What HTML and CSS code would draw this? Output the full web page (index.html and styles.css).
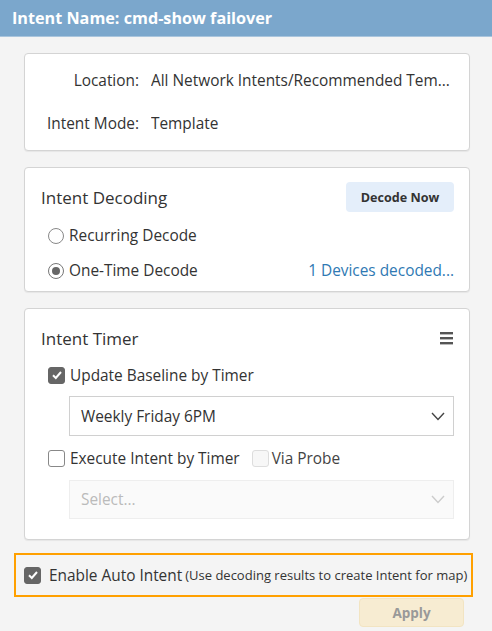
FILE: index.html
```html
<!DOCTYPE html>
<html>
<head>
<meta charset="utf-8">
<link rel="stylesheet" href="styles.css">
</head>
<body>
<div class="header">Intent Name: cmd-show failover</div>
<div class="main">
  <div class="card info">
    <div class="lbl">Location:</div><div class="val">All Network Intents/Recommended Tem...</div>
    <div class="lbl">Intent Mode:</div><div class="val">Template</div>
  </div>
  <div class="card decoding">
    <div class="row-head">
      <div class="title">Intent Decoding</div>
      <button class="btn-decode">Decode Now</button>
    </div>
    <div class="opt first"><span class="radio"></span>Recurring Decode</div>
    <div class="opt split"><div class="opt-l"><span class="radio on"></span>One-Time Decode</div><a class="link">1 Devices decoded...</a></div>
  </div>
  <div class="card timer">
    <div class="row-head t">
      <div class="title">Intent Timer</div>
      <svg class="menu" width="13" height="14" viewBox="0 0 13 14"><rect x="0" y="1" width="13" height="2.4" fill="#555"/><rect x="0" y="6" width="13" height="2.4" fill="#555"/><rect x="0" y="11" width="13" height="2.4" fill="#555"/></svg>
    </div>
    <div class="opt first"><span class="cb on"><svg width="12" height="12" viewBox="0 0 12 12"><path d="M2 6.3 L4.8 9 L10 3" stroke="#fff" stroke-width="2" fill="none"/></svg></span>Update Baseline by Timer</div>
    <div class="select"><span>Weekly Friday 6PM</span><svg width="14" height="9" viewBox="0 0 14 9"><path d="M1 1 L7 7.5 L13 1" stroke="#444" stroke-width="1.4" fill="none"/></svg></div>
    <div class="opt mid"><span class="cb"></span>Execute Intent by Timer<span class="cb dis"></span><span class="dis-t">Via Probe</span></div>
    <div class="select disabled"><span>Select...</span><svg width="14" height="9" viewBox="0 0 14 9"><path d="M1 1 L7 7.5 L13 1" stroke="#ccc" stroke-width="1.4" fill="none"/></svg></div>
  </div>
</div>
<div class="auto">
  <span class="cb on"><svg width="12" height="12" viewBox="0 0 12 12"><path d="M2 6.3 L4.8 9 L10 3" stroke="#fff" stroke-width="2" fill="none"/></svg></span><span class="auto-t">Enable Auto Intent</span><span class="auto-s">(Use decoding results to create Intent for map)</span>
</div>
<div class="foot"><button class="btn-apply">Apply</button></div>
</body>
</html>
```
FILE: styles.css
```css
html, body { margin: 0; padding: 0; }
body {
  width: 492px; height: 631px; overflow: hidden;
  background: #f4f4f4;
  font-family: "Open Sans", "Noto Sans", sans-serif;
  font-size: 15.4px; color: #333;
}
.header {
  height: 37px; box-sizing: border-box;
  background: #7ba7cc; border-bottom: 1px solid #a9c5dd;
  color: #fff; font-weight: 700; font-size: 16.2px;
  display: flex; align-items: center; padding-left: 12px;
}
.main { padding: 16px 22px 0 24px; display: flex; flex-direction: column; gap: 16px; }
.card {
  background: #fff; border: 1px solid #d4d4d4; border-radius: 4px;
  box-shadow: 0 1px 1px rgba(0,0,0,0.06);
  box-sizing: border-box;
}
.info {
  height: 98px; display: grid; grid-template-columns: 114px 1fr;
  column-gap: 12px; align-content: center;
  grid-auto-rows: 43px; align-items: center;
}
.lbl { text-align: right; }
.val { white-space: nowrap; overflow: hidden; }
.decoding { height: 125px; padding: 13px 15px 0 16px; }
.row-head { display: flex; justify-content: space-between; align-items: center; height: 32px; }
.title { font-size: 17px; color: #333; }
.btn-decode {
  font-family: inherit; font-weight: 700; font-size: 12.6px; color: #333;
  background: #e4eefa; border: none; border-radius: 4px;
  width: 108px; height: 30px; padding: 0;
}
.opt { display: flex; align-items: center; height: 35px; padding-left: 7px; white-space: nowrap; }
.decoding .opt.first { margin-top: 5px; }
.split { justify-content: space-between; }
.opt-l { display: flex; align-items: center; }
.link { color: #2f79b3; }
.radio {
  width: 16px; height: 16px; border: 1px solid #888; border-radius: 50%;
  margin-right: 5px; box-sizing: border-box; position: relative; background: #fff;
}
.radio.on { border-color: #777; }
.radio.on::after {
  content: ""; position: absolute; left: 3px; top: 3px; width: 8px; height: 8px;
  border-radius: 50%; background: #666;
}
.timer { height: 232px; padding: 13px 15px 0 16px; }
.menu { margin-right: 1px; }
.timer .opt { height: 36px; }
.timer .opt.first { margin-top: 3px; }
.timer .opt.mid { margin-top: 4px; }
.cb {
  width: 17px; height: 17px; border: 1px solid #888; border-radius: 3px;
  box-sizing: border-box; margin-right: 5px; background: #fff;
  display: inline-flex; align-items: center; justify-content: center;
  flex: none;
}
.cb.on { background: #666; border-color: #666; }
.cb.dis { border-color: #ddd; background: #f7f7f7; margin-left: 12px; margin-right: 3px; }
.dis-t { color: #444; }
.select {
  margin-left: 28px; height: 40px; box-sizing: border-box;
  border: 1px solid #d0d0d0; display: flex; align-items: center;
  justify-content: space-between; padding: 0 8px 0 11px; background: #fff;
  margin-top: 3px;
}
.select.disabled { background: #fafafa; border-color: #eee; color: #bbb; height: 39px; margin-top: 4px; }
.auto {
  margin: 13px 19px 0 14px; height: 44px; box-sizing: border-box;
  border: 2px solid #ffa000; display: flex; align-items: center;
  padding-left: 8px; background: #f4f4f4; white-space: nowrap;
}
.auto .cb { margin-right: 8px; }
.auto-t { font-size: 15.4px; margin-right: 3px; }
.auto-s { font-size: 13px; }
.foot { display: flex; justify-content: flex-end; padding-right: 28px; margin-top: 1px; }
.btn-apply {
  font-family: inherit; font-weight: 700; font-size: 13.5px; color: #999;
  background: #f7ecd2; border: 1px solid #f2e4c2; border-radius: 4px;
  width: 105px; height: 29px; padding: 0;
}
```
